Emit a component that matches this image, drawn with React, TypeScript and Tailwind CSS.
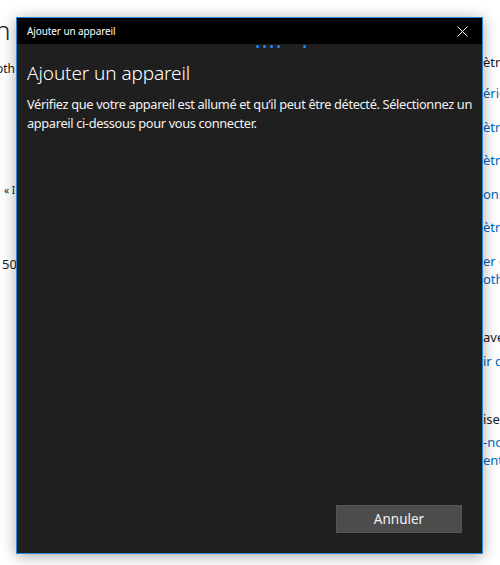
import React from "react";

const font = { fontFamily: '"Noto Sans", "Open Sans", sans-serif' };

function ProgressDots() {
  return (
    <div className="flex h-[4px] items-center">
      <span className="ml-[239px] h-[3px] w-[3px] rounded-full bg-[#1a8cff]" />
      <span className="ml-[4px] h-[3px] w-[3px] rounded-full bg-[#1a8cff]" />
      <span className="ml-[4px] h-[3px] w-[3px] rounded-full bg-[#1a8cff]" />
      <span className="ml-[4px] h-[3px] w-[3px] rounded-full bg-[#1a8cff]" />
      <span className="ml-[23px] h-[3px] w-[3px] rounded-full bg-[#1a8cff]" />
    </div>
  );
}

function AddDeviceDialog() {
  return (
    <div className="absolute left-[16px] top-[17px] flex h-[537px] w-[467px] flex-col border border-[#2b88d8] bg-[#1f1f1f] shadow-[0_2px_14px_rgba(0,0,0,0.35)]">
      <div className="flex h-[26px] shrink-0 items-center justify-between bg-black pl-[10px] pr-[14px]">
        <span className="text-[10px] tracking-[-0.1px] text-white">Ajouter un appareil</span>
        <svg width="11" height="11" viewBox="0 0 11 11" className="text-white">
          <path d="M0.5 0.5 L10.5 10.5 M10.5 0.5 L0.5 10.5" stroke="currentColor" strokeWidth="1" />
        </svg>
      </div>
      <ProgressDots />
      <div className="flex flex-1 flex-col pl-[10px] pr-[8px]">
        <h1 className="mt-[11px] text-[19px] font-light leading-[28px] tracking-[-0.1px] text-white">
          Ajouter un appareil
        </h1>
        <p className="mt-[8px] text-[12.8px] leading-[19px] tracking-[-0.35px] text-[#f2f2f2]">
          Vérifiez que votre appareil est allumé et qu’il peut être détecté. Sélectionnez un
          appareil ci-dessous pour vous connecter.
        </p>
        <div className="flex-1" />
        <div className="mb-[20px] flex justify-end pr-[12px]">
          <button className="h-[28px] w-[126px] border border-[#555] bg-[#4c4c4c] text-[13.5px] text-[#f2f2f2]">
            Annuler
          </button>
        </div>
      </div>
    </div>
  );
}

export default function App() {
  return (
    <div className="relative h-[565px] w-[500px] overflow-hidden bg-white" style={font}>
      <div className="flex h-full">
        <div className="w-[16px] shrink-0 whitespace-nowrap text-[#1a1a1a]">
          <div className="ml-[-5px] mt-[14px] text-[26px] font-light leading-[32px] tracking-[-1px]">n é</div>
          <div className="ml-[-4px] mt-[15px] text-[12px] leading-[16px]">oth</div>
          <div className="ml-[4px] mt-[106px] text-[10px] leading-[14px]">«  I</div>
          <div className="ml-[2px] mt-[58px] text-[13px] leading-[18px]">50</div>
        </div>
        <div className="ml-[467px] shrink-0 whitespace-nowrap text-[13px]">
          <div className="mt-[53px] leading-[18px] text-[#1a1a1a]">ètre</div>
          <div className="mt-[13px] leading-[18px] text-[#0067c0]">ériq</div>
          <div className="mt-[16px] leading-[18px] text-[#0067c0]">ètre</div>
          <div className="mt-[15px] leading-[18px] text-[#0067c0]">ètre</div>
          <div className="mt-[16px] leading-[18px] text-[#0067c0]">onna</div>
          <div className="mt-[15px] leading-[18px] text-[#0067c0]">ètre</div>
          <div className="mt-[16px] leading-[18px] text-[#0067c0]">er d</div>
          <div className="leading-[18px] text-[#0067c0]">oth</div>
          <div className="mt-[40px] leading-[18px] text-[#1a1a1a]">ave:</div>
          <div className="mt-[6px] leading-[18px] text-[#0067c0]">ir d</div>
          <div className="mt-[40px] leading-[18px] text-[#1a1a1a]">ise</div>
          <div className="mt-[5px] leading-[18px] text-[#0067c0]">-no</div>
          <div className="leading-[18px] text-[#0067c0]">ent</div>
        </div>
      </div>
      <AddDeviceDialog />
    </div>
  );
}
